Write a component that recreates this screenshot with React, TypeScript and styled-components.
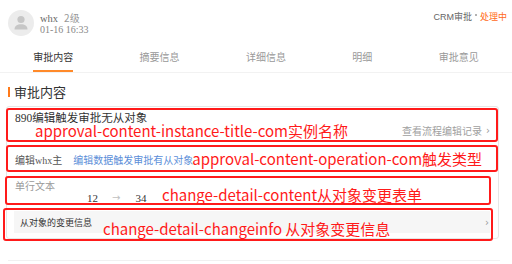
import React from "react";
import styled, { createGlobalStyle, css } from "styled-components";

const GlobalStyle = createGlobalStyle`
  html, body { margin: 0; padding: 0; background: #fff; }
  body { font-family: "Liberation Serif", "Noto Sans CJK SC", serif; color: #333; }
  * { box-sizing: border-box; }
`;

const SANS = `"Noto Sans CJK SC", "Liberation Sans", sans-serif`;

const Page = styled.div`
  width: 512px;
  height: 264px;
  overflow: hidden;
  background: #fff;
`;

const Header = styled.div`
  display: flex;
  justify-content: space-between;
  align-items: flex-start;
  height: 46px;
  padding: 10px 5px 0 8px;
`;

const User = styled.div`
  display: flex;
  align-items: flex-start;
`;

const Avatar = styled.div`
  width: 26px;
  height: 26px;
  border-radius: 50%;
  background: #ececec;
  display: flex;
  align-items: center;
  justify-content: center;
  overflow: hidden;
`;

const UserInfo = styled.div`
  margin-left: 6px;
  padding-top: 2px;
  display: flex;
  flex-direction: column;
  font-size: 10px;
  line-height: 11px;
`;

const NameLine = styled.div`
  display: flex;
  align-items: baseline;
  gap: 6px;
`;

const Name = styled.span`
  color: #666;
  font-size: 10.5px;
`;

const Level = styled.span`
  color: #999;
  font-family: ${SANS};
`;

const DateText = styled.span`
  color: #888;
`;

const Status = styled.div`
  margin-top: 1px;
  font-family: "Liberation Sans", "Noto Sans CJK SC", sans-serif;
  font-size: 9px;
  line-height: 12px;
  color: #666;
  display: flex;
  align-items: center;
`;

const Dot = styled.span`
  display: inline-block;
  width: 2px;
  height: 2px;
  border-radius: 50%;
  background: #999;
  margin: 0 3px 0 3px;
  position: relative;
  top: -2px;
`;

const StatusValue = styled.span`
  color: #ff6a1a;
`;

const Tabs = styled.div`
  display: flex;
  justify-content: space-around;
  border-bottom: 1px solid #f2f2f2;
  height: 27px;
`;

const Tab = styled.div<{ $active?: boolean }>`
  height: 26px;
  padding-top: 4px;
  font-family: ${SANS};
  font-size: 10px;
  line-height: 14px;
  color: ${(p) => (p.$active ? "#333" : "#999")};
  border-bottom: 2px solid ${(p) => (p.$active ? "#ff8a2a" : "transparent")};
`;

const SectionTitle = styled.div`
  margin-top: 11px;
  padding-left: 8px;
  display: flex;
  align-items: center;
  font-family: ${SANS};
  font-size: 13px;
  line-height: 16px;
  color: #333;
  &::before {
    content: "";
    display: block;
    width: 2px;
    height: 10px;
    background: #ff7a1a;
    margin-right: 4px;
  }
`;

const Card = styled.div`
  margin: 6px 13px 0 6px;
  border: 1px solid #e6e6e6;
  border-radius: 3px;
  padding-top: 1px;
`;

const Row = styled.div<{ $h: number; $mt?: number; $ml?: number; $mr?: number; $mb?: number }>`
  position: relative;
  height: ${(p) => p.$h}px;
  margin: ${(p) => p.$mt ?? 0}px ${(p) => p.$mr ?? 0}px ${(p) => p.$mb ?? 0}px
    ${(p) => p.$ml ?? 0}px;
  border: 2px solid #ff1a1a;
  border-radius: 3px;
`;

const Annotation = styled.span<{ $top: number; $left: number }>`
  font-family: ${SANS};
  font-size: 15px;
  line-height: 16px;
  color: #ff1a1a;
  white-space: nowrap;
  ${(p) => css`
    position: absolute;
    top: ${p.$top}px;
    left: ${p.$left}px;
  `}
`;

const InlineAnnotation = styled.span`
  font-family: ${SANS};
  font-size: 15px;
  line-height: 16px;
  color: #ff1a1a;
  white-space: nowrap;
  margin-left: -1px;
`;

const TitleBlock = styled.div`
  padding: 1px 6px 0 7px;
  display: flex;
  flex-direction: column;
`;

const InstanceTitle = styled.div`
  font-size: 11.5px;
  line-height: 14px;
  color: #333;
`;

const RecordLink = styled.div`
  align-self: flex-end;
  display: flex;
  align-items: center;
  font-family: ${SANS};
  font-size: 10px;
  line-height: 12px;
  color: #a0a0a0;
`;

const Chevron = styled.span`
  font-family: "DejaVu Sans", sans-serif;
  font-size: 10px;
  color: #999;
  margin-left: 4px;
`;

const OperationLine = styled.div`
  display: flex;
  align-items: center;
  height: 100%;
  padding: 1px 0 0 7px;
  font-size: 10px;
`;

const Operator = styled.span`
  color: #555;
  font-family: "Liberation Serif", "Noto Sans CJK SC", serif;
  margin-right: 11px;
`;

const OpLink = styled.span`
  color: #5b8ed8;
  font-family: ${SANS};
`;

const FieldBlock = styled.div`
  padding: 2px 0 0 8px;
  display: flex;
  flex-direction: column;
`;

const FieldLabel = styled.div`
  font-family: ${SANS};
  font-size: 10px;
  line-height: 12px;
  color: #999;
`;

const ValueLine = styled.div`
  display: flex;
  align-items: center;
  margin-left: 72px;
  font-size: 11px;
  line-height: 12px;
  color: #333;
`;

const Arrow = styled.span`
  font-family: "DejaVu Sans", sans-serif;
  font-size: 10px;
  color: #c0c0c0;
  margin: 0 15px 0 14px;
`;

const ChangePanel = styled.div`
  margin: 1px 1px 0 9px;
  height: 22px;
  background: #f6f6f6;
  display: flex;
  align-items: center;
  justify-content: space-between;
  padding: 0 1px 0 6px;
  font-family: ${SANS};
  font-size: 9px;
  color: #333;
`;

const Divider = styled.div`
  margin: 21px 12px 0 8px;
  height: 1px;
  background: #f0f0f0;
`;

const PersonIcon = () => (
  <svg width="26" height="26" viewBox="0 0 26 26">
    <circle cx="13" cy="9.5" r="3.6" fill="#c6c6c6" />
    <path d="M6.5 19.5 C6.5 15.6 9.3 14.2 13 14.2 C16.7 14.2 19.5 15.6 19.5 19.5 Z" fill="#c6c6c6" />
  </svg>
);

const tabs = ["审批内容", "摘要信息", "详细信息", "明细", "审批意见"];

export default function App() {
  return (
    <Page>
      <GlobalStyle />
      <Header>
        <User>
          <Avatar>
            <PersonIcon />
          </Avatar>
          <UserInfo>
            <NameLine>
              <Name>whx</Name>
              <Level>2级</Level>
            </NameLine>
            <DateText>01-16 16:33</DateText>
          </UserInfo>
        </User>
        <Status>
          CRM审批
          <Dot />
          <StatusValue>处理中</StatusValue>
        </Status>
      </Header>
      <Tabs>
        {tabs.map((t, i) => (
          <Tab key={t} $active={i === 0}>
            {t}
          </Tab>
        ))}
      </Tabs>
      <SectionTitle>审批内容</SectionTitle>
      <Card>
        <Row $h={34} $ml={-1}>
          <TitleBlock>
            <InstanceTitle>890编辑触发审批无从对象</InstanceTitle>
            <RecordLink>
              查看流程编辑记录
              <Chevron>›</Chevron>
            </RecordLink>
          </TitleBlock>
          <Annotation $top={13} $left={27}>
            approval-content-instance-title-com实例名称
          </Annotation>
        </Row>
        <Row $h={27} $mt={3} $ml={-1}>
          <OperationLine>
            <Operator>编辑whx主</Operator>
            <OpLink>编辑数据触发审批有从对象</OpLink>
            <InlineAnnotation>approval-content-operation-com触发类型</InlineAnnotation>
          </OperationLine>
        </Row>
        <Row $h={29} $mt={4} $ml={-2} $mr={7}>
          <FieldBlock>
            <FieldLabel>单行文本</FieldLabel>
            <ValueLine>
              <span>12</span>
              <Arrow>→</Arrow>
              <span>34</span>
            </ValueLine>
          </FieldBlock>
          <Annotation $top={9} $left={155}>
            change-detail-content从对象变更表单
          </Annotation>
        </Row>
        <Row $h={33} $mt={3} $ml={-4} $mr={5} $mb={-3}>
          <ChangePanel>
            <span>从对象的变更信息</span>
            <Chevron>›</Chevron>
          </ChangePanel>
          <Annotation $top={11} $left={98}>
            change-detail-changeinfo 从对象变更信息
          </Annotation>
        </Row>
      </Card>
      <Divider />
    </Page>
  );
}
